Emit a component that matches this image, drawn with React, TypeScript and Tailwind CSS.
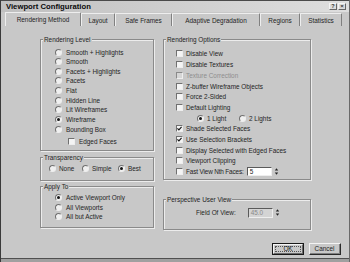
import React from "react";

function Radio({ checked = false }: { checked?: boolean }) {
  return (
    <span className="flex items-center justify-center w-[7px] h-[7px] shrink-0 rounded-full bg-[#f0f0f0] border border-[#707070] border-b-[#eeeeee] border-r-[#eeeeee]">
      {checked && <span className="w-[3px] h-[3px] rounded-full bg-[#151515]" />}
    </span>
  );
}

function Check({ checked = false, disabled = false }: { checked?: boolean; disabled?: boolean }) {
  return (
    <span
      className={
        disabled
          ? "flex items-center justify-center w-[7px] h-[7px] shrink-0 bg-[#d6d6d6] border border-[#8a8a8a] border-b-[#eeeeee] border-r-[#eeeeee]"
          : "flex items-center justify-center w-[7px] h-[7px] shrink-0 bg-[#f4f4f4] border border-[#707070] border-b-[#eeeeee] border-r-[#eeeeee]"
      }
    >
      {checked && (
        <svg width="5" height="5" viewBox="0 0 5 5">
          <path d="M0.4 2.4 L1.9 3.9 L4.6 0.9" stroke="#151515" strokeWidth="1.2" fill="none" />
        </svg>
      )}
    </span>
  );
}

function Spinner() {
  return (
    <svg width="5" height="9" viewBox="0 0 5 9" className="shrink-0">
      <path d="M2.5 1.2 L4.2 3.4 L0.8 3.4Z" fill="#222" />
      <path d="M0.8 5.6 L4.2 5.6 L2.5 7.8Z" fill="#222" />
    </svg>
  );
}

function Group({ title, className, children }: { title: string; className: string; children: React.ReactNode }) {
  return (
    <fieldset className={"min-w-0 border border-[#8a8a8a] shadow-[inset_1px_1px_0_#ececec,1px_1px_0_#ececec] " + className}>
      <legend className="ml-[2px] px-[1px] leading-[7px] bg-[#c8c8c8]">{title}</legend>
      {children}
    </fieldset>
  );
}

const levels = [
  "Smooth + Highlights",
  "Smooth",
  "Facets + Highlights",
  "Facets",
  "Flat",
  "Hidden Line",
  "Lit Wireframes",
  "Wireframe",
  "Bounding Box",
];

const tabs: [string, string][] = [
  ["Rendering Method", "w-[76px]"],
  ["Layout", "w-[34px]"],
  ["Safe Frames", "w-[57px]"],
  ["Adaptive Degradation", "w-[88px]"],
  ["Regions", "w-[40px]"],
  ["Statistics", "w-[42px]"],
];

export default function App() {
  return (
    <div className="w-[350px] h-[262px] overflow-hidden bg-[#c8c8c8] font-['Liberation_Sans',Arial,sans-serif] text-[6.4px] leading-[7px] text-[#242424] border-l border-[#3a3a3a] border-r border-r-[#6a6a6a] flex flex-col">
      {/* Title bar */}
      <div className="h-[12px] shrink-0 flex items-center justify-between pl-[5px] pr-[3px] bg-gradient-to-r from-[#c0c0c0] to-[#dedede] border-t border-[#4a4a4a]">
        <span className="font-bold text-[7.7px] leading-[9px] text-[#0a0a0a]">Viewport Configuration</span>
        <div className="flex gap-[1px]">
          <span className="w-[8px] h-[7px] flex items-center justify-center bg-[#dcdcdc] border border-[#f4f4f4] border-b-[#666] border-r-[#666] text-[5.5px] leading-[5px] font-bold text-[#333]">?</span>
          <span className="w-[8px] h-[7px] flex items-center justify-center bg-[#dcdcdc] border border-[#f4f4f4] border-b-[#666] border-r-[#666] text-[6px] leading-[5px] font-bold text-[#333]">×</span>
        </div>
      </div>

      {/* Tabs */}
      <div className="h-[14px] shrink-0 flex items-end pl-[4px]">
        {tabs.map(([t, w], i) => (
          <div
            key={t}
            className={
              (i === 0 ? "h-[14px] " : "h-[13px] ") +
              w +
              " flex items-center justify-center border-t border-l border-[#eeeeee] border-r border-r-[#808080] rounded-t-[1px]"
            }
          >
            {t}
          </div>
        ))}
      </div>

      {/* Body */}
      <div className="flex pl-[39px] pt-[9.5px]">
        {/* Left column */}
        <div className="w-[114px] flex flex-col">
          <Group title="Rendering Level" className="h-[115.5px]">
            <div className="flex flex-col pt-[4.7px] pl-[14px]">
              {levels.map((l) => (
                <div key={l} className="flex items-center h-[9.65px] gap-[4px]">
                  <Radio checked={l === "Wireframe"} />
                  <span>{l}</span>
                </div>
              ))}
              <div className="flex items-center h-[9.6px] mt-[2.6px] pl-[13px] gap-[4px]">
                <Check />
                <span>Edged Faces</span>
              </div>
            </div>
          </Group>

          <Group title="Transparency" className="h-[27.5px] mt-[2.5px]">
            <div className="flex items-center h-[9.6px] mt-[3.7px] pl-[8px]">
              <div className="w-[33px] flex items-center gap-[3px]">
                <Radio />
                <span>None</span>
              </div>
              <div className="w-[36px] flex items-center gap-[3px]">
                <Radio />
                <span>Simple</span>
              </div>
              <div className="flex items-center gap-[3px]">
                <Radio checked />
                <span>Best</span>
              </div>
            </div>
          </Group>

          <Group title="Apply To" className="h-[45.5px] mt-[1.5px]">
            <div className="flex flex-col pt-[3.5px] pl-[14px]">
              {["Active Viewport Only", "All Viewports", "All but Active"].map((l, i) => (
                <div key={l} className="flex items-center h-[9.5px] gap-[4px]">
                  <Radio checked={i === 0} />
                  <span>{l}</span>
                </div>
              ))}
            </div>
          </Group>
        </div>

        {/* Right column */}
        <div className="w-[148px] ml-[9px] flex flex-col">
          <Group title="Rendering Options" className="h-[144.5px]">
            <div className="flex flex-col pt-[6.1px] pl-[12px]">
              {[
                ["Disable View", false, false],
                ["Disable Textures", false, false],
                ["Texture Correction", false, true],
                ["Z-buffer Wireframe Objects", false, false],
                ["Force 2-Sided", false, false],
                ["Default Lighting", false, false],
              ].map(([l, c, d]) => (
                <div key={l as string} className="flex items-center h-[10.7px] gap-[3px]">
                  <Check checked={c as boolean} disabled={d as boolean} />
                  <span className={d ? "text-[#8e8e8e]" : ""}>{l as string}</span>
                </div>
              ))}
              <div className="flex items-center h-[10.7px] pl-[21px]">
                <div className="w-[42px] flex items-center gap-[3px]">
                  <Radio checked />
                  <span>1 Light</span>
                </div>
                <div className="flex items-center gap-[3px]">
                  <Radio />
                  <span>2 Lights</span>
                </div>
              </div>
              {[
                ["Shade Selected Faces", true],
                ["Use Selection Brackets", true],
                ["Display Selected with Edged Faces", false],
                ["Viewport Clipping", false],
              ].map(([l, c]) => (
                <div key={l as string} className="flex items-center h-[10.7px] gap-[3px]">
                  <Check checked={c as boolean} />
                  <span>{l as string}</span>
                </div>
              ))}
              <div className="flex items-center h-[10.7px] gap-[3px]">
                <Check />
                <span className="tracking-[-0.15px]">Fast View Nth Faces:</span>
                <div className="flex items-center gap-[2px]">
                  <span className="w-[25px] h-[9px] flex items-center pl-[2px] bg-white border border-[#5a5a5a] border-b-[#eeeeee] border-r-[#eeeeee]">5</span>
                  <Spinner />
                </div>
              </div>
            </div>
          </Group>

          <Group title="Perspective User View" className="h-[34.5px] mt-[15.5px]">
            <div className="flex items-center h-[10px] mt-[5px] pl-[32px]">
              <span>Field Of View:</span>
              <div className="flex items-center gap-[2px] ml-[12px]">
                <span className="w-[25px] h-[10px] flex items-center pl-[2px] bg-[#d4d4d4] text-[#8a8a8a] border border-[#5a5a5a] border-b-[#eeeeee] border-r-[#eeeeee]">45.0</span>
                <Spinner />
              </div>
            </div>
          </Group>
        </div>
      </div>

      {/* Buttons */}
      <div className="flex justify-end gap-[5px] pr-[8px] mt-[13px]">
        <div className="w-[32px] h-[12px] border border-[#1a1a1a] flex">
          <div className="flex-1 flex border border-[#f4f4f4] border-b-[#6a6a6a] border-r-[#6a6a6a]">
            <span className="flex-1 m-[1px] flex items-center justify-center leading-[4px] border border-dotted border-[#555]">OK</span>
          </div>
        </div>
        <div className="w-[32px] h-[12px] border border-[#f4f4f4] border-b-[#2a2a2a] border-r-[#2a2a2a] flex">
          <div className="flex-1 flex items-center justify-center border-b border-r border-[#808080]">Cancel</div>
        </div>
      </div>

      <div className="mt-auto h-[4px] border-t border-[#505050] bg-[#a0a0a0]" />
    </div>
  );
}
